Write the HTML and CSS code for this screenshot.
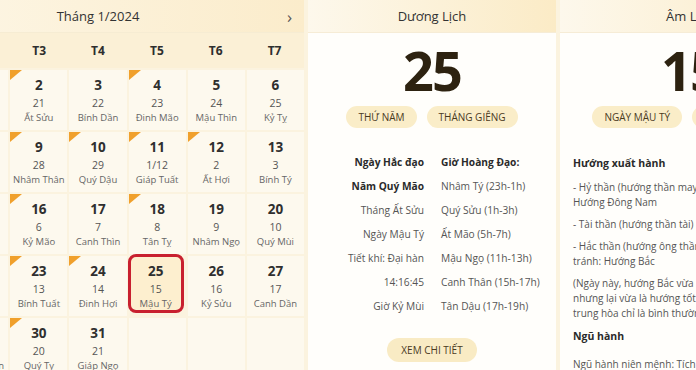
FILE: index.html
```html
<!DOCTYPE html>
<html lang="vi">
<head>
<meta charset="utf-8">
<title>Lịch tháng 1/2024</title>
<link rel="stylesheet" href="styles.css">
</head>
<body>
<div class="page">
  <section class="cal">
    <div class="cal-head">
      <span class="nav">‹</span>
      <span class="cal-title">Tháng 1/2024</span>
      <span class="nav">›</span>
    </div>
    <div class="weekdays">
      <span>CN</span><span>T2</span><span>T3</span><span>T4</span><span>T5</span><span>T6</span><span>T7</span>
    </div>
    <div class="grid">
      <div class="cell empty"></div>
      <div class="cell mark"><b>1</b><i>20</i><small>Giáp Tý</small></div>
      <div class="cell mark"><b>2</b><i>21</i><small>Ất Sửu</small></div>
      <div class="cell"><b>3</b><i>22</i><small>Bính Dần</small></div>
      <div class="cell mark"><b>4</b><i>23</i><small>Đinh Mão</small></div>
      <div class="cell"><b>5</b><i>24</i><small>Mậu Thìn</small></div>
      <div class="cell"><b>6</b><i>25</i><small>Kỷ Tỵ</small></div>

      <div class="cell"><b>7</b><i>26</i><small>Canh Ngọ</small></div>
      <div class="cell"><b>8</b><i>27</i><small>Tân Mùi</small></div>
      <div class="cell mark"><b>9</b><i>28</i><small>Nhâm Thân</small></div>
      <div class="cell mark"><b>10</b><i>29</i><small>Quý Dậu</small></div>
      <div class="cell mark"><b>11</b><i>1/12</i><small>Giáp Tuất</small></div>
      <div class="cell mark"><b>12</b><i>2</i><small>Ất Hợi</small></div>
      <div class="cell"><b>13</b><i>3</i><small>Bính Tý</small></div>

      <div class="cell"><b>14</b><i>4</i><small>Đinh Sửu</small></div>
      <div class="cell"><b>15</b><i>5</i><small>Mậu Dần</small></div>
      <div class="cell mark"><b>16</b><i>6</i><small>Kỷ Mão</small></div>
      <div class="cell"><b>17</b><i>7</i><small>Canh Thìn</small></div>
      <div class="cell mark"><b>18</b><i>8</i><small>Tân Tỵ</small></div>
      <div class="cell"><b>19</b><i>9</i><small>Nhâm Ngọ</small></div>
      <div class="cell"><b>20</b><i>10</i><small>Quý Mùi</small></div>

      <div class="cell"><b>21</b><i>11</i><small>Giáp Thân</small></div>
      <div class="cell"><b>22</b><i>12</i><small>Ất Dậu</small></div>
      <div class="cell mark"><b>23</b><i>13</i><small>Bính Tuất</small></div>
      <div class="cell mark"><b>24</b><i>14</i><small>Đinh Hợi</small></div>
      <div class="cell today"><b>25</b><i>15</i><small>Mậu Tý</small></div>
      <div class="cell"><b>26</b><i>16</i><small>Kỷ Sửu</small></div>
      <div class="cell"><b>27</b><i>17</i><small>Canh Dần</small></div>

      <div class="cell"><b>28</b><i>18</i><small>Tân Mão</small></div>
      <div class="cell"><b>29</b><i>19</i><small>Nhâm Thìn</small></div>
      <div class="cell mark"><b>30</b><i>20</i><small>Quý Tỵ</small></div>
      <div class="cell"><b>31</b><i>21</i><small>Giáp Ngọ</small></div>
      <div class="cell empty"></div>
      <div class="cell empty"></div>
      <div class="cell empty"></div>
    </div>
  </section>

  <section class="panel">
    <div class="panel-head">Dương Lịch</div>
    <div class="panel-body">
      <div class="big">25</div>
      <div class="chips"><span class="chip">THỨ NĂM</span><span class="chip">THÁNG GIÊNG</span></div>
      <div class="info">
        <span class="l strong">Ngày Hắc đạo</span><span class="r strong">Giờ Hoàng Đạo:</span>
        <span class="l strong">Năm Quý Mão</span><span class="r">Nhâm Tý (23h-1h)</span>
        <span class="l">Tháng Ất Sửu</span><span class="r">Quý Sửu (1h-3h)</span>
        <span class="l">Ngày Mậu Tý</span><span class="r">Ất Mão (5h-7h)</span>
        <span class="l">Tiết khí: Đại hàn</span><span class="r">Mậu Ngọ (11h-13h)</span>
        <span class="l">14:16:45</span><span class="r">Canh Thân (15h-17h)</span>
        <span class="l">Giờ Kỷ Mùi</span><span class="r">Tân Dậu (17h-19h)</span>
      </div>
      <div class="more"><span class="chip btn">XEM CHI TIẾT</span></div>
    </div>
  </section>

  <section class="panel lunar">
    <div class="panel-head">Âm Lịch</div>
    <div class="panel-body">
      <div class="big">15</div>
      <div class="chips"><span class="chip">NGÀY MẬU TÝ</span><span class="chip">THÁNG ẤT SỬU</span></div>
      <div class="notes">
        <h3>Hướng xuất hành</h3>
        <p>- Hỷ thần (hướng thần may mắn) - TỐT:<br>Hướng Đông Nam</p>
        <p>- Tài thần (hướng thần tài) - TỐT: Hướng Bắc</p>
        <p>- Hắc thần (hướng ông thần ác) - XẤU, nên<br>tránh: Hướng Bắc</p>
        <p>(Ngày này, hướng Bắc vừa là hướng Tài thần<br>nhưng lại vừa là hướng tốt lại vừa xấu, nên<br>trung hòa chỉ là bình thường)</p>
        <h3>Ngũ hành</h3>
        <p>Ngũ hành niên mệnh: Tích Lịch Hỏa</p>
      </div>
    </div>
  </section>
</div>
</body>
</html>
```
FILE: styles.css
```css
html, body {
  margin: 0;
  padding: 0;
  width: 696px;
  height: 370px;
  overflow: hidden;
  background: #fbf3df;
  font-family: "Open Sans", "Noto Sans", sans-serif;
  color: #333;
}

.page {
  display: flex;
  gap: 4px;
  margin-left: -108px;
  height: 370px;
}

/* ---------- calendar ---------- */
.cal {
  flex: 0 0 412px;
  display: flex;
  flex-direction: column;
  background: #fbf3df;
}

.cal-head {
  flex: 0 0 33px;
  display: flex;
  align-items: center;
  justify-content: space-between;
  padding: 0 12px;
  background: linear-gradient(to right, #fdf7e8, #fbeccb);
  border-bottom: 1px solid #f6ecd3;
  box-sizing: border-box;
}

.cal-title {
  font-size: 13px;
  color: #333;
}

.nav {
  font-size: 17px;
  color: #555;
  line-height: 1;
}

.weekdays {
  flex: 0 0 35px;
  display: grid;
  grid-template-columns: repeat(7, 1fr);
  align-items: center;
  background: #fbf0d6;
}

.weekdays span {
  text-align: center;
  font-weight: 700;
  font-size: 12px;
  color: #2e2e2e;
}

.grid {
  flex: 0 0 auto;
  margin-top: 2px;
  display: grid;
  grid-template-columns: repeat(7, 1fr);
  grid-auto-rows: 60px;
  gap: 2px;
}

.cell {
  position: relative;
  background: #fdf9ee;
  display: flex;
  flex-direction: column;
  align-items: center;
  padding-top: 6px;
  box-sizing: border-box;
}

.cell b {
  font-size: 13.5px;
  line-height: 18px;
  font-weight: 700;
  color: #2f2f2f;
}

.cell i {
  font-style: normal;
  font-size: 10.5px;
  line-height: 14px;
  margin-top: 2px;
  color: #555;
}

.cell small {
  font-size: 9.5px;
  line-height: 13px;
  margin-top: 1px;
  color: #666;
}

.cell.mark::before {
  content: "";
  position: absolute;
  left: 0;
  top: 0;
  border-top: 10px solid #f0a02c;
  border-right: 12px solid transparent;
}

.cell.today {
  background: #fdefcf;
  border: 3px solid #c8202f;
  border-radius: 8px;
  margin: -2px 2px 3px -1px;
  padding-top: 5px;
}

/* ---------- panels ---------- */
.panel {
  flex: 0 0 248px;
  display: flex;
  flex-direction: column;
  background: #fffefb;
}

.panel.lunar {
  flex-basis: 260px;
}

.panel-head {
  flex: 0 0 33px;
  display: flex;
  align-items: center;
  justify-content: center;
  font-size: 13px;
  color: #333;
  background: linear-gradient(to right, #fdf8ec, #fbebc6);
  border-bottom: 1px solid #f6ecd6;
  box-sizing: border-box;
}

.panel-body {
  display: flex;
  flex-direction: column;
}

.big {
  margin-top: 12px;
  text-align: center;
  font-size: 54px;
  line-height: 50px;
  font-weight: 700;
  letter-spacing: -2px;
  color: #2d2210;
}

.chips {
  display: flex;
  justify-content: center;
  gap: 10px;
  margin-top: 11px;
}

.chip {
  height: 22px;
  display: inline-flex;
  align-items: center;
  padding: 0 12px;
  border-radius: 11px;
  background: #faedc8;
  font-size: 10px;
  color: #4a3a1e;
  white-space: nowrap;
}

.info {
  display: grid;
  grid-template-columns: 116px 1fr;
  column-gap: 17px;
  grid-auto-rows: 24px;
  align-items: center;
  margin-top: 22px;
  font-size: 10.2px;
  color: #555;
}

.info .l {
  text-align: right;
  white-space: nowrap;
}

.info .r {
  white-space: nowrap;
}

.info .strong {
  font-weight: 700;
  color: #2a2a2a;
}

.more {
  display: flex;
  justify-content: center;
  margin-top: 20px;
}

.btn {
  height: 24px;
  padding: 0 14px;
  border-radius: 12px;
  background: #f9ebc4;
}

.notes {
  padding: 0 13px;
  margin-top: 28px;
  font-size: 10px;
  color: #555;
  white-space: nowrap;
}

.notes h3 {
  margin: 0 0 10px;
  font-size: 10.5px;
  font-weight: 700;
  color: #2a2a2a;
  line-height: 14px;
}

.notes p {
  margin: 0 0 7px;
  line-height: 15px;
}

.notes p + h3 {
  margin-top: 8px;
  margin-bottom: 14px;
}
```
